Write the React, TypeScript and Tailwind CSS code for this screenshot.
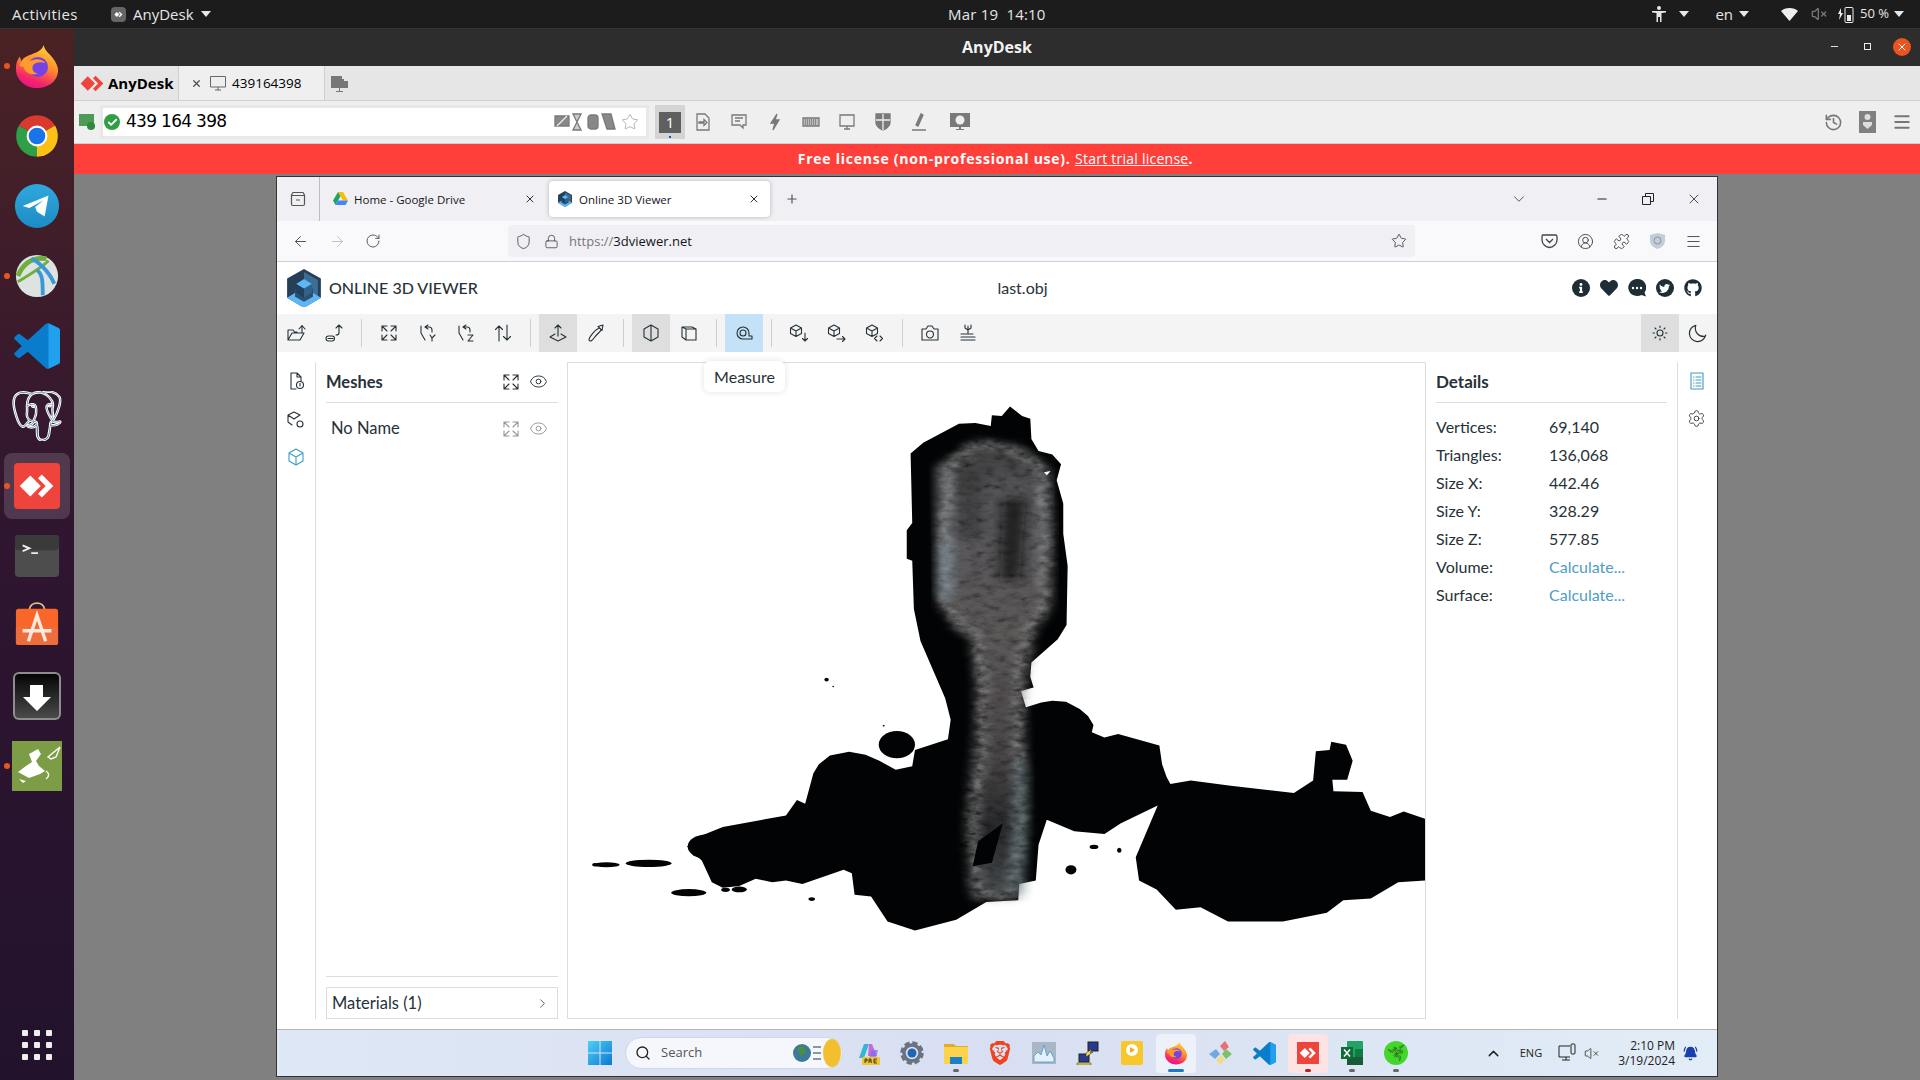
import type { ReactNode } from 'react'
import { ChevronRight, Search, Star, Lock, Shield, RotateCw, ArrowLeft, ArrowRight, Plus, X, ChevronDown, Minus, Menu, Puzzle, CircleUserRound, Eye, Settings, BellRing, ChevronUp, VolumeX, History, Check } from 'lucide-react'
import { FaGithub, FaTwitter, FaHeart, FaInfo } from 'react-icons/fa'
import { SiPostgresql, SiBrave, SiRazer } from 'react-icons/si'

const UI = "font-['Lato',sans-serif]"

function AnyDeskMark({ color = '#fff' }: { color?: string }) {
  return (
    <>
      <path d="M17 13 28 24 17 35 6 24Z" fill={color} />
      <path d="M29 12 41 24 29 36 25 32 33 24 25 16Z" fill={color} />
    </>
  )
}

function Firefox({ size = 46 }: { size?: number }) {
  return (
    <svg width={size} height={size} viewBox="0 0 48 48">
      <defs>
        <linearGradient id="ffa" x1="0.7" y1="0" x2="0.3" y2="1">
          <stop offset="0" stopColor="#ffd43a" />
          <stop offset="0.45" stopColor="#ff8a2a" />
          <stop offset="0.8" stopColor="#f5256a" />
          <stop offset="1" stopColor="#e31587" />
        </linearGradient>
      </defs>
      <path d="M31 2c1 6 5 8 9 13 4 5 6 10 6 13 0 12-10 19-22 19S2 38 2 27c0-5 1-9 4-13l2 6c2-4 6-7 10-8 5-2 11-4 13-10Z" fill="url(#ffa)" />
      <circle cx="25" cy="25" r="10.5" fill="#7542e5" />
      <path d="M6 24c1-6 5-10 8-10-1 3 2 5 5 4 5-2 11-1 14 3-5-2-11-1-13 2-2 4 0 8 5 9-7 2-14-1-15-7l-4-1Z" fill="#ff9a2e" />
    </svg>
  )
}

function Chrome({ size = 50 }: { size?: number }) {
  return (
    <svg width={size} height={size} viewBox="0 0 48 48">
      <path d="M24 24 6.700 14A20 20 0 0 1 41.300 14Z" fill="#d93a2d" />
      <path d="M24 24 41.300 14A20 20 0 0 1 24 44Z" fill="#fbc116" />
      <path d="M24 24 24 44A20 20 0 0 1 6.700 14Z" fill="#2f9e48" />
      <circle cx="24" cy="24" r="10" fill="#fff" />
      <circle cx="24" cy="24" r="8" fill="#1a73e8" />
    </svg>
  )
}

function Telegram() {
  return (
    <svg width={46} height={46} viewBox="0 0 48 48">
      <defs>
        <linearGradient id="tg" x1="0" y1="0" x2="0" y2="1">
          <stop offset="0" stopColor="#2fa8de" />
          <stop offset="1" stopColor="#1c8cc4" />
        </linearGradient>
      </defs>
      <circle cx="24" cy="24" r="23" fill="url(#tg)" />
      <path d="M9 24 36 13 32 35 24 30 22 25 31 18 16 26Z" fill="#fff" />
    </svg>
  )
}

function AnyConnect() {
  return (
    <svg width={46} height={46} viewBox="0 0 48 48">
      <circle cx="24" cy="24" r="22" fill="#dde3e1" />
      <path d="M4 24C10 10 20 4 34 6" stroke="#6fae3a" strokeWidth="5" fill="none" />
      <path d="M4 30C14 24 30 14 36 8" stroke="#6fae3a" strokeWidth="3" fill="none" />
      <path d="M18 6c6 2 18 12 24 26M24 18c6 4 6 12 6 26" stroke="#3a97d8" strokeWidth="4" fill="none" />
    </svg>
  )
}

function VSCode({ size = 46 }: { size?: number }) {
  return (
    <svg width={size} height={size} viewBox="0 0 100 100">
      <path d="M70.9 99.3c1.6.6 3.4.6 5-.2l20.6-9.9c2.2-1 3.5-3.2 3.5-5.6V16.4c0-2.4-1.4-4.6-3.5-5.6L75.9.9c-2.1-1-4.5-.8-6.4.6L30.1 37.5 12.9 24.5c-1.6-1.2-3.8-1.1-5.3.3L2 29.8c-1.8 1.7-1.8 4.5 0 6.2L17 50 2 64c-1.8 1.7-1.8 4.5 0 6.2l5.5 5c1.5 1.3 3.7 1.4 5.3.2l17.2-13 39.4 36c.5.5 1 .8 1.5 1zM75 27.2 45.1 50 75 72.8V27.2z" fill="#0a7ccc" />
      <path d="M75 .5 96.5 10.8c2.2 1 3.5 3.2 3.5 5.6v67.2c0 2.4-1.4 4.6-3.5 5.6L75 99.5Z" fill="#22a0f0" />
    </svg>
  )
}

function AppStore() {
  return (
    <svg className="-translate-y-[2px]" width={46} height={46} viewBox="0 0 48 48">
      <path d="M16 9c1-9 15-9 16 0" fill="none" stroke="#e8b98c" strokeWidth="2" />
      <rect x="2" y="8" width="44" height="38" rx="3" fill="#f8662a" />
      <rect x="2" y="27" width="44" height="19" rx="3" fill="#ee6d3c" />
      <path d="M15 42 24 15 33 42M9 31H39" fill="none" stroke="#ffe8dc" strokeWidth="3.5" />
    </svg>
  )
}

function Downloader() {
  return (
    <svg width={50} height={50} viewBox="0 0 50 50">
      <defs>
        <linearGradient id="dl" x1="0" y1="0" x2="0" y2="1">
          <stop offset="0" stopColor="#050505" />
          <stop offset="1" stopColor="#4a4a4a" />
        </linearGradient>
      </defs>
      <rect x="1" y="1" width="48" height="48" rx="6" fill="#8d8d8d" />
      <rect x="3" y="3" width="44" height="44" rx="4" fill="url(#dl)" />
      <path d="M18 14H31V26H39L25 40 11 26H18Z" fill="#fff" />
    </svg>
  )
}

function GreenTile() {
  return (
    <svg width={50} height={50} viewBox="0 0 50 50">
      <rect width="50" height="50" fill="#7d9c46" />
      <path d="M17 13 26 8 29 13 24 20 27 25 33 30 28 33 17 37 6 31 14 25 20 21Z" fill="#fff" />
      <path d="M36 16 48 6 44 16 39 18ZM34 30c3 2 4 5 0 8" fill="none" stroke="#fff" strokeWidth="1.4" />
      <path d="M7 38 14 40 11 42Z" fill="#fff" />
    </svg>
  )
}

function DockItem({ children, dot, active }: { children: ReactNode; dot?: boolean; active?: boolean }) {
  return (
    <div className="relative flex h-[70px] w-full items-center justify-center">
      {active && <div className="absolute left-1 top-[2px] h-[66px] w-[66px] rounded-lg bg-white/15" />}
      {dot && <div className="absolute left-1 top-[32px] size-[6px] rounded-full bg-[#e95420]" />}
      <div className="relative flex items-center justify-center">{children}</div>
    </div>
  )
}

function Dock() {
  return (
    <aside className="flex w-[74px] shrink-0 flex-col items-center justify-between bg-gradient-to-b from-[#4b2224] via-[#2f1530] to-[#22122c] pt-[2px] pb-[20px]">
      <div className="w-full">
        <DockItem dot><Firefox /></DockItem>
        <DockItem><Chrome /></DockItem>
        <DockItem><Telegram /></DockItem>
        <DockItem dot><AnyConnect /></DockItem>
        <DockItem><VSCode /></DockItem>
        <DockItem><SiPostgresql size={50} color="#336791" stroke="#fff" strokeWidth={0.5} /></DockItem>
        <DockItem dot active>
          <div className="size-[46px] rounded bg-[#ef443b]">
            <svg width={46} height={46} viewBox="0 0 48 48"><AnyDeskMark /></svg>
          </div>
        </DockItem>
        <DockItem>
          <svg width={46} height={46} viewBox="0 0 48 48">
            <rect x="1" y="2" width="46" height="44" rx="4" fill="#4d4d4d" />
            <rect x="1" y="2" width="46" height="16" rx="4" fill="#3a3a3a" />
            <path d="M9 13 16 16 9 19M18 21H25" fill="none" stroke="#eee" strokeWidth="2" />
          </svg>
        </DockItem>
        <DockItem><AppStore /></DockItem>
        <DockItem><Downloader /></DockItem>
        <DockItem dot><GreenTile /></DockItem>
      </div>
      <div className="grid grid-cols-3 gap-[6px]">
        {Array.from({ length: 9 }).map((_, i) => (
          <div key={i} className="size-[6px] rounded-[1px] bg-[#eee]" />
        ))}
      </div>
    </aside>
  )
}

function Caret() {
  return <span className="inline-block size-0 border-x-[5px] border-t-[6px] border-x-transparent border-t-[#e8e8e8]" />
}

function TopBar() {
  return (
    <header className="relative flex h-[29px] shrink-0 items-center border-b border-[#333] bg-[#1c1c1c] text-[15px] text-[#e6e6e6] font-['Open_Sans',sans-serif]">
      <span className="ml-3 w-[99px] tracking-[0.4px]">Activities</span>
      <span className="flex items-center gap-[7px]">
        <span className="flex size-[15px] items-center justify-center rounded-sm bg-[#666]">
          <svg width={11} height={11} viewBox="0 0 48 48"><AnyDeskMark /></svg>
        </span>
        AnyDesk
        <Caret />
      </span>
      <span className="absolute left-[948px] tracking-[0.2px]">Mar 19&nbsp; 14:10</span>
      <div className="ml-auto flex items-center pr-[16px]">
        <svg width={14} height={18} viewBox="0 0 14 18" fill="#e6e6e6"><circle cx="7" cy="3" r="2" /><path d="M0 6H14V7.500L9.500 8V17H8V12H6V17H4.500V8L0 7.500Z" /></svg>
        <span className="ml-[13px] flex"><Caret /></span>
        <span className="ml-[26px] mr-[6px]">en</span>
        <Caret />
        <svg className="ml-[32px]" width={17} height={14} viewBox="0 0 17 14" fill="#eee"><path d="M0 4C4 0 13 0 17 4L8.500 14Z" /></svg>
        <VolumeX className="ml-[13px] text-[#777]" size={16} />
        <svg className="ml-[11px]" width={16} height={18} viewBox="0 0 16 18"><path d="M3 3 0 9H2L1 15 5 8H3Z" fill="#eee" /><rect x="7" y="2.500" width="8" height="15" rx="1" fill="none" stroke="#eee" /><rect x="9" y="10" width="4" height="6" fill="#eee" /></svg>
        <span className="ml-[6px] mr-[5px] text-[13px]">50 %</span>
        <Caret />
      </div>
    </header>
  )
}

function AdIcon({ children, w = 18, className }: { children: ReactNode; w?: number; className?: string }) {
  return (
    <svg className={className} width={w} height={18} viewBox={`0 0 ${w} 18`} fill="none" stroke="#7a7a7a" strokeWidth="1.300">
      {children}
    </svg>
  )
}

function AnyDeskChrome() {
  const tools = [
    <AdIcon key="f" w={14}><path d="M1 1H9L13 5V17H1ZM3 9H8V6.500L11 9.500 8 12.500V10H3Z" /></AdIcon>,
    <AdIcon key="c"><path d="M2 2H16V12H13V15L10 12H2ZM5 5H13M5 8H10" /></AdIcon>,
    <AdIcon key="l" w={12}><path d="M8 1 2 10H6L4 17 10 7H6Z" fill="#7a7a7a" /></AdIcon>,
    <AdIcon key="k"><path d="M1 5H17V13H1Z" fill="#bbb" /><path d="M3 7H15M3 9H15M3 11H15" strokeDasharray="1 1" /></AdIcon>,
    <AdIcon key="m"><path d="M2 2H16V13H2ZM9 13V16M6 16H12" /></AdIcon>,
    <AdIcon key="s" w={16}><path d="M1 1H15V10C15 13 11 16 8 17 5 16 1 13 1 10Z" fill="#7a7a7a" /><path d="M8 1V17M1 7H15" stroke="#efefef" /></AdIcon>,
    <AdIcon key="p"><path d="M6 12 11 1 13 2 8 13ZM2 17H16" fill="#7a7a7a" /></AdIcon>,
  ]
  return (
    <div className="shrink-0 text-black">
      <div className="relative flex h-[37px] items-center justify-center bg-[#2d2d2d] pb-[2px] text-[16px] font-bold text-[#f2f2f2] font-['Open_Sans',sans-serif]">
        AnyDesk
        <div className="absolute right-[9px] flex items-center gap-[22px]">
          <Minus className="-translate-x-[2px]" size={11} color="#eee" />
          <span className="size-[7px] border border-[#eee]" />
          <span className="flex size-[18px] items-center justify-center rounded-full bg-[#e95420]"><X size={12} color="#fff" /></span>
        </div>
      </div>
      <div className="flex h-[35px] items-stretch border-b border-[#cfcfcf] bg-[#e6e6e6] font-['Open_Sans',sans-serif]">
        <div className="flex w-[105px] items-center gap-[4px] border-r border-[#cfcfcf] pl-[6px] text-[15px] font-bold">
          <svg width={24} height={17} viewBox="5 11 37 26"><AnyDeskMark color="#ef443b" /></svg>
          AnyDesk
        </div>
        <div className="flex w-[146px] items-center border-r border-[#cfcfcf] bg-[#efefef] pl-3 text-[13.500px]">
          <X size={11} color="#555" strokeWidth={3} />
          <svg className="ml-[8px]" width={16} height={16} viewBox="0 0 16 16" fill="none" stroke="#666"><path d="M.5 1.500H15.500V12H.5ZM8 12V15M5 15H11" /></svg>
          <span className="ml-[6px]">439164398</span>
        </div>
        <div className="ml-[6px] flex items-center">
          <svg width={17} height={17} viewBox="0 0 17 17" fill="#777"><path d="M0 1H11V4H13V6H17V13H9V16H12V17H5V16H8V13H0Z" /></svg>
        </div>
      </div>
      <div className="flex h-[43px] items-center border-b border-[#cfcfcf] bg-[#efefef]">
        <svg className="ml-[5px]" width={16} height={16} viewBox="0 0 16 16"><rect width="15" height="12" fill="#4f9a56" /><circle cx="12" cy="12" r="4" fill="#2f8a3d" /></svg>
        <div className="ml-[5px] flex h-[34px] w-[549px] items-center border-[3px] border-[#e8e8e8] bg-white">
          <span className="ml-[1px] flex size-4 items-center justify-center rounded-full bg-[#2f9e44]"><Check size={11} color="#fff" strokeWidth={4} /></span>
          <span className="ml-[6px] text-[17px] font-['DejaVu_Sans',sans-serif] tracking-[-0.7px]">439 164 398</span>
          <div className="ml-auto flex items-center pr-[7px]">
            <AdIcon><path d="M2 3H16V13H2Z" fill="#888" /><path d="M4 13 14 3" stroke="#eee" /></AdIcon>
            <AdIcon className="ml-[1px]" w={10}><path d="M1 1H9L1 17H9Z" fill="#ccc" /></AdIcon>
            <AdIcon className="ml-[5px]" w={12}><rect x="1" y="2" width="10" height="14" rx="3" fill="#888" /></AdIcon>
            <AdIcon className="ml-[2px]" w={16}><path d="M1 1H10L14 16H6Z" fill="#888" /></AdIcon>
            <Star className="ml-[4px]" size={18} color="#aaa" strokeWidth={1.200} />
          </div>
        </div>
        <div className="ml-[6px] flex h-[34px] w-[30px] items-center justify-center bg-[#d4d4d4]">
          <div className="relative flex h-[21px] w-[22px] items-center justify-center bg-[#5f5f5f] text-[14px] text-white">
            1
            <span className="absolute -bottom-[5px] size-[2px] bg-blue-700" />
          </div>
        </div>
        <div className="flex">
          {tools.map((t, i) => (
            <div key={i} className="flex w-[36px] items-center justify-center">{t}</div>
          ))}
        </div>
        <div className="ml-[12px] flex h-[20px] w-[22px] items-center justify-center">
          <svg width={20} height={20} viewBox="0 0 20 20" fill="#7a7a7a"><path d="M0 1H20V15H11V17H14V18H6V17H9V15H0Z" /><circle cx="10" cy="8" r="4.500" fill="#efefef" /></svg>
        </div>
        <div className="ml-auto flex items-center gap-[16px] pr-[8px]">
          <History size={19} color="#777" />
          <svg width={17} height={22} viewBox="0 0 17 22"><rect width="17" height="22" fill="#808080" /><circle cx="8.500" cy="6" r="3" fill="#ddd" /><path d="M4 11H13V14L8.500 18 4 14Z" fill="#ddd" /></svg>
          <Menu size={20} color="#777" strokeWidth={2.400} />
        </div>
      </div>
      <div className="flex h-[30px] items-center justify-center bg-[#ff3f3a] pb-[2px] text-[14px] font-bold tracking-[0.75px] text-white font-['Open_Sans',sans-serif]">
        <span className="pr-[3px]">
          Free license (non-professional use).&nbsp;<span className="font-normal tracking-[0.25px] underline">Start trial license</span>.
        </span>
      </div>
    </div>
  )
}

function Tabs() {
  return (
    <div className="flex h-[44px] items-center bg-[#f0f0f4] font-['Open_Sans',sans-serif] text-[11.500px] text-[#15141a]">
      <div className="flex h-full w-[43px] items-center justify-center border-r border-[#bcbcc2]">
        <svg width={16} height={16} viewBox="0 0 16 16" fill="none" stroke="#555" strokeWidth="1.200"><path d="M3 1.500H13L14.500 4V13C14.500 14 14 14.500 13 14.500H3C2 14.500 1.500 14 1.500 13V4ZM1.500 4.500H14.500M6 9H10" /></svg>
      </div>
      <div className="flex h-full w-[229px] items-center pl-[13px] pr-[13px]">
        <svg width={15} height={14} viewBox="0 0 15 14">
          <path d="M5 0H10L15 8.500H10Z" fill="#fbbc04" />
          <path d="M5 0 0 8.500 2.500 13 7.500 4.300Z" fill="#1fa463" />
          <path d="M5 8.500H15L12.500 13H2.500Z" fill="#4285f4" />
        </svg>
        <span className="ml-[6px] pt-[1px]">Home - Google Drive</span>
        <X className="ml-auto" size={12} color="#333" />
      </div>
      <div className="flex h-[36px] w-[221px] items-center rounded bg-white pl-[9px] pr-[10px] shadow-[0_0_4px_rgba(0,0,0,0.25)]">
        <O3dvLogo size={14} />
        <span className="ml-[7px] pt-[1px]">Online 3D Viewer</span>
        <X className="ml-auto" size={12} color="#333" />
      </div>
      <Plus className="ml-[15px]" size={14} color="#555" />
      <div className="ml-auto flex items-center pr-[15px]">
        <ChevronDown size={18} color="#555" strokeWidth={1.300} />
        <Minus className="ml-[67px]" size={14} color="#222" />
        <svg className="ml-[33px]" width={12} height={12} viewBox="0 0 12 12" fill="none" stroke="#222"><path d="M.5 3.500H8.500V11.500H.5ZM3.500 3.500V.5H11.500V8.500H8.500" /></svg>
        <X className="ml-[32px]" size={16} color="#222" strokeWidth={1.200} />
      </div>
    </div>
  )
}

function NavBar() {
  return (
    <div className="flex h-[41px] items-center border-b border-[#cfcfd8] bg-[#f9f9fb] font-['Open_Sans',sans-serif] text-[#444]">
      <ArrowLeft className="ml-[15px]" size={17} strokeWidth={1.300} />
      <ArrowRight className="ml-[20px] text-[#bbb]" size={17} strokeWidth={1.300} />
      <RotateCw className="ml-[19px]" size={16} strokeWidth={1.300} />
      <div className="ml-[127px] flex h-[32px] w-[907px] items-center rounded bg-[#f0f0f4] pl-[7px] pr-[8px] text-[13px]">
        <Shield size={17} strokeWidth={1.200} />
        <Lock className="ml-[12px]" size={15} strokeWidth={1.300} />
        <span className="ml-[10px] pt-[2px] text-[#777]">https://<span className="text-[#15141a]">3dviewer.net</span></span>
        <Star className="ml-auto" size={16} strokeWidth={1.300} />
      </div>
      <div className="ml-auto flex items-center gap-[19px] pr-[15px]">
        <svg width={17} height={16} viewBox="0 0 17 16" fill="none" stroke="#444" strokeWidth="1.300"><path d="M2 2H15C16 2 16 3 16 4V7C16 11 12 14.500 8.500 14.500S1 11 1 7V4C1 3 1 2 2 2ZM5 6 8.500 9.500 12 6" /></svg>
        <CircleUserRound size={17} strokeWidth={1.300} />
        <Puzzle size={17} strokeWidth={1.300} />
        <svg width={17} height={18} viewBox="0 0 17 18"><path d="M1 3 8.500 1 16 3V9C16 13 12 16 8.500 17 5 16 1 13 1 9Z" fill="#c4ccd8" /><circle cx="8.500" cy="8.500" r="3.500" fill="none" stroke="#8893a5" /></svg>
        <Menu size={17} strokeWidth={1.300} />
      </div>
    </div>
  )
}

function O3dvLogo({ size = 34 }: { size?: number }) {
  return (
    <svg width={size} height={size * 1.140} viewBox="0 0 34 39">
      <path d="M17 0 34 9.500V29L17 39 0 29V9.500Z" fill="#263f58" />
      <path d="M17 3 31 11V27.500L17 35.500Z" fill="#3d6c94" />
      <path d="M17 39 0 29 9 23.500 17 28 25 23.500 34 29Z" fill="#5cb6f8" />
      <path d="M17 15 26 20V28L17 33 8 28V20Z" fill="#2b4e6e" />
      <path d="M17 10 25 15 17 20 9 15Z" fill="#5cb6f8" />
      <path d="M9 15 17 20V29L9 24Z" fill="#224059" />
      <path d="M25 15V24L17 29V20Z" fill="#33618a" />
    </svg>
  )
}

function AppHeader() {
  return (
    <div className={`flex h-[52px] items-center justify-between bg-white pl-[10px] pr-[9px] text-[#263238] ${UI}`}>
      <div className="flex w-[300px] items-center gap-[8px]">
        <O3dvLogo />
        <span className="text-[16px] font-medium">ONLINE 3D VIEWER</span>
      </div>
      <span className="text-[16px]">last.obj</span>
      <div className="flex w-[250px] justify-end gap-[10px] pr-[6px] text-[#1f2d36]">
        <span className="flex size-[18px] items-center justify-center rounded-full bg-[#1f2d36]"><FaInfo size={10} color="#fff" /></span>
        <FaHeart size={18} />
        <svg width={18} height={18} viewBox="0 0 18 18">
          <path d="M9 0A9 8.500 0 1 0 13.500 16L18 17.500 16.500 13.500A8.500 8.500 0 0 0 9 0Z" fill="#1f2d36" />
          <circle cx="5" cy="9" r="1.200" fill="#fff" />
          <circle cx="9" cy="9" r="1.200" fill="#fff" />
          <circle cx="13" cy="9" r="1.200" fill="#fff" />
        </svg>
        <span className="flex size-[18px] items-center justify-center rounded-full bg-[#1f2d36]"><FaTwitter size={11} color="#fff" /></span>
        <FaGithub size={18} />
      </div>
    </div>
  )
}

function Icon({ children, size = 20 }: { children: ReactNode; size?: number }) {
  return (
    <svg width={size} height={size} viewBox="0 0 20 20" fill="none" stroke="#263238" strokeWidth="1.100" strokeLinecap="round" strokeLinejoin="round">
      {children}
    </svg>
  )
}

function Tool({ children, bg, tip }: { children: ReactNode; bg?: string; tip?: string }) {
  return (
    <div className={`relative flex h-[38px] w-[38px] items-center justify-center ${bg ?? ''}`}>
      {children}
      {tip && (
        <div className="absolute left-[-21px] top-[47px] z-10 flex h-[31px] w-[81px] items-center justify-center rounded-md bg-white text-[16px] text-[#263238] shadow-[0_0_6px_rgba(0,0,0,0.12)]">
          {tip}
        </div>
      )}
    </div>
  )
}

function Sep() {
  return <div className="mx-2 h-[28px] w-px bg-[#cfcfcf]" />
}

function Toolbar() {
  return (
    <div className={`flex h-[38px] items-center bg-[#f4f4f4] ${UI}`}>
      <Tool><Icon><path d="M2 17V7H7L8.500 9H11M2 17H14L18 10H6L2 17M13 6 16 2.500 19 6M16 3V9" /></Icon></Tool>
      <Tool><Icon><path d="M8 13H4.500A2.500 2.500 0 0 0 4.500 18H8A2.500 2.500 0 0 0 8 13ZM4 15.500H9M12 5 15 2 18 5M15 2.500V10C15 11.500 14 12 12 12" /></Icon></Tool>
      <Sep />
      <Tool><Icon><path d="M3 8V3H8M3 3 8 8M17 8V3H12M17 3 12 8M3 12V17H8M3 17 8 12M17 12V17H12M17 17 12 12" /></Icon></Tool>
      <Tool><Icon><path d="M11 2 8 4 11 6M8 4H12C14 4 15 5 15 7V9M4 3V10L8 17M13 12 15 15 18 12M15 15V18" /></Icon></Tool>
      <Tool><Icon><path d="M11 2 8 4 11 6M8 4H12C14 4 15 5 15 7V9M4 3V10L8 17M13 12H18L13 18H18" /></Icon></Tool>
      <Tool><Icon><path d="M6 18V3M2.500 6.500 6 3 9.500 6.500M14 2V17M10.500 13.500 14 17 17.500 13.500" /></Icon></Tool>
      <Sep />
      <Tool bg="bg-[#dedede]"><Icon><path d="M10 13V2M7 5 10 2 13 5M7 11 2 14 10 18 18 14 13 11" /></Icon></Tool>
      <Tool><Icon><path d="M3 17C3 14 9 7 13 5M17 2 12 3.500 16 7.500ZM3 17C4 19 6 18 8 15 11 11 14 9 15 7" /></Icon></Tool>
      <Sep />
      <Tool bg="bg-[#dedede]"><Icon><path d="M10 2 17 6V14L10 18 3 14V6ZM10 2V18" /></Icon></Tool>
      <Tool><Icon><path d="M7 6H17V17H7ZM7 6 3 4V14L7 17M3 4H13L17 6" /></Icon></Tool>
      <Sep />
      <Tool bg="bg-[#c3e1f7]" tip="Measure"><Icon><path d="M9 4A6 6 0 1 0 9 16H18V13H15M9 4A6 6 0 0 1 15 10V13M9 7A3 3 0 1 0 9 13 3 3 0 0 0 9 7Z" /></Icon></Tool>
      <Sep />
      <Tool><Icon><path d="M7 2 12.500 5V10.500L7 13.500 1.500 10.500V5ZM1.500 5 7 8 12.500 5M7 8V13.500M16 10V18M13.500 15.500 16 18 18.500 15.500" /></Icon></Tool>
      <Tool><Icon><path d="M7 2 12.500 5V10.500L7 13.500 1.500 10.500V5ZM1.500 5 7 8 12.500 5M7 8V13.500M10 16H18M15.500 13.500 18 16 15.500 18.500" /></Icon></Tool>
      <Tool><Icon><path d="M7 2 12.500 5V10.500L7 13.500 1.500 10.500V5ZM1.500 5 7 8 12.500 5M7 8V13.500M12 13 9.500 15.500 12 18M15 13 17.500 15.500 15 18" /></Icon></Tool>
      <Sep />
      <Tool><Icon><path d="M2 6H6L8 3H12L14 6H18V17H2ZM10 8A3.500 3.500 0 1 0 10 15 3.500 3.500 0 0 0 10 8Z" /></Icon></Tool>
      <Tool><Icon><path d="M10 10V3M7 2V5L10 7 13 5V2M3 11H15M3 14H17M3 17H17" /></Icon></Tool>
      <div className="ml-auto flex">
        <Tool bg="bg-[#dedede]"><Icon><circle cx="10" cy="10" r="3" /><path d="M10 3V4.500M10 15.500V17M3 10H4.500M15.500 10H17M5 5 6 6M14 14 15 15M15 5 14 6M6 14 5 15" /></Icon></Tool>
        <Tool><Icon size={22}><path d="M16 13A7.500 7.500 0 0 1 8 3 7.500 7.500 0 1 0 17 12" /></Icon></Tool>
      </div>
    </div>
  )
}

function SidePanelLeft() {
  return (
    <div className={`flex w-[290px] shrink-0 text-[16.500px] text-[#263238] ${UI}`}>
      <div className="flex w-[39px] flex-col items-center gap-[18px] border-r border-[#ddd] pt-[9px]">
        <Icon><path d="M5 2H11L15 6V10M5 2V18H10M11 2V6H15" /><circle cx="14" cy="14" r="3.500" /><path d="M14 12.500V15" /></Icon>
        <Icon><path d="M8 3 14 6 8 10 2 6ZM2 6V13L6 16M14 12A3 3 0 1 0 14 18 3 3 0 0 0 14 12Z" /></Icon>
        <Icon><path d="M10 2 17 6V14L10 18 3 14V6ZM3 6 10 10 17 6M10 10V18" stroke="#3f9bc3" /></Icon>
      </div>
      <div className="flex min-w-0 flex-1 flex-col pl-[10px] pr-[9px]">
        <div className="flex h-[41px] items-center justify-between border-b border-[#ddd]">
          <span className="font-bold">Meshes</span>
          <div className="mr-[10px] flex gap-[8px]">
            <Icon><path d="M3 8V3H8M3 3 8 8M17 8V3H12M17 3 12 8M3 12V17H8M3 17 8 12M17 12V17H12M17 17 12 12" /></Icon>
            <Eye size={19} strokeWidth={1.200} />
          </div>
        </div>
        <div className="mt-[12px] flex h-[27px] items-center justify-between pl-[5px]">
          <span>No Name</span>
          <div className="mr-[10px] flex gap-[8px] opacity-50">
            <Icon><path d="M3 8V3H8M3 3 8 8M17 8V3H12M17 3 12 8M3 12V17H8M3 17 8 12M17 12V17H12M17 17 12 12" /></Icon>
            <Eye size={19} strokeWidth={1.200} />
          </div>
        </div>
        <div className="mt-auto border-t border-[#ddd] pt-[10px]">
          <div className="flex h-[32px] items-center justify-between border border-[#ddd] pl-[5px] pr-[7px]">
            <span>Materials (1)</span>
            <ChevronRight size={15} strokeWidth={1.200} />
          </div>
        </div>
      </div>
    </div>
  )
}

const MESH = '783,74 805,100 820,108 822,165 835,198 860,208 876,235 868,280 880,345 880,430 888,520 886,685 870,725 822,790 820,830 826,860 803,870 812,915 840,902 860,897 885,900 910,920 925,940 935,965 932,985 955,1000 980,990 1055,1022 1060,1075 1068,1110 1075,1130 1112,1120 1185,1135 1300,1155 1335,1120 1340,1038 1365,1035 1368,1012 1395,1020 1407,1065 1397,1118 1370,1118 1372,1150 1425,1152 1440,1205 1475,1222 1500,1207 1541,1228 1541,1400 1490,1405 1440,1450 1390,1455 1360,1490 1280,1515 1180,1515 1130,1475 1085,1482 1050,1425 1018,1400 1012,1335 1052,1190 985,1240 955,1270 900,1262 850,1230 835,1300 830,1400 800,1410 798,1455 740,1460 685,1510 610,1540 560,1515 530,1445 500,1440 495,1380 480,1370 405,1410 375,1400 350,1405 320,1395 290,1415 260,1420 240,1405 222,1345 195,1305 225,1272 260,1250 375,1218 395,1175 410,1185 425,1100 435,1075 455,1050 490,1040 520,1048 545,1065 575,1090 605,1080 610,1035 670,1005 675,950 665,890 620,730 608,640 605,505 595,500 595,420 605,400 602,205 625,175 690,122 720,120 748,128 750,98 768,100'

const ROCK = '665,240 720,175 795,190 845,245 852,420 850,630 820,700 808,800 800,900 806,1240 792,1445 720,1445 712,1240 728,1000 730,850 720,720 690,690 660,620 660,420'

const SPOTS: [number, number, number, number][] = [
  [577, 1020, 33, 38], [230, 1305, 34, 34], [48, 1356, 24, 7], [125, 1352, 42, 10], [198, 1434, 32, 10],
  [290, 1425, 14, 8], [265, 1426, 8, 6], [422, 1452, 6, 5], [894, 1370, 10, 13], [936, 1306, 8, 6],
  [982, 1315, 4, 7], [449, 838, 4, 5], [27, 1356, 5, 5], [553, 967, 2, 2], [461, 857, 1.500, 2],
]

function MeshDrawing() {
  return (
    <svg className="block h-full w-full" viewBox="568 363 856 654">
      <defs>
        <filter id="rock" x="-0.1" y="-0.05" width="1.200" height="1.100">
          <feGaussianBlur in="SourceGraphic" stdDeviation="13" result="soft" />
          <feTurbulence type="fractalNoise" baseFrequency="0.045 0.065" numOctaves="4" seed="7" result="noise" />
          <feColorMatrix in="noise" type="matrix" values="2.200 0 0 0 -0.400 2.200 0 0 0 -0.400 2.200 0 0 0 -0.400 0 0 0 1 0" result="gray" />
          <feComposite in="gray" in2="soft" operator="in" result="tex" />
          <feBlend in="tex" in2="soft" mode="multiply" />
        </filter>
        <filter id="soft" x="-0.5" y="-0.5" width="2" height="2">
          <feGaussianBlur stdDeviation="12" />
        </filter>
        <linearGradient id="rockfill" x1="0" y1="0" x2="0" y2="1">
          <stop offset="0" stopColor="#3a3a3b" />
          <stop offset="0.12" stopColor="#58595b" />
          <stop offset="0.45" stopColor="#5c5859" />
          <stop offset="0.7" stopColor="#484546" />
          <stop offset="0.85" stopColor="#262729" />
          <stop offset="1" stopColor="#4a4e50" />
        </linearGradient>
      </defs>
      <g transform="translate(580 380) scale(0.5485 0.357)">
        <polygon points={MESH} fill="#020304" />
        {SPOTS.map(([cx, cy, rx, ry], i) => (
          <ellipse key={i} cx={cx} cy={cy} rx={rx} ry={ry} fill="#020304" />
        ))}
        <polygon points={ROCK} fill="url(#rockfill)" filter="url(#rock)" />
        <path d="M650 240 672 235 676 620 660 610Z" fill="#9aa3a8" opacity="0.5" filter="url(#soft)" />
        <path d="M838 250 854 255 850 600 834 600Z" fill="#8a8d8e" opacity="0.35" filter="url(#soft)" />
        <path d="M690 250H730L730 440H690Z" fill="#141416" opacity="0.35" filter="url(#soft)" />
        <path d="M770 330H812L800 560H765Z" fill="#0e0f10" opacity="0.75" filter="url(#soft)" />
        <path d="M657 450 680 460 672 620 654 600Z" fill="#7f9fb2" opacity="0.4" filter="url(#soft)" />
        <path d="M796 1060 812 1060 806 1440 785 1440Z" fill="#5f7780" opacity="0.6" filter="url(#soft)" />
        <path d="M725 1290 770 1240 750 1350 715 1360Z" fill="#020304" />
        <path d="M845 258 857 254 850 266Z" fill="#fff" />
      </g>
    </svg>
  )
}

const DETAILS: [string, string, boolean?][] = [
  ['Vertices:', '69,140'],
  ['Triangles:', '136,068'],
  ['Size X:', '442.46'],
  ['Size Y:', '328.29'],
  ['Size Z:', '577.85'],
  ['Volume:', 'Calculate...', true],
  ['Surface:', 'Calculate...', true],
]

function SidePanelRight() {
  return (
    <div className={`flex w-[291px] shrink-0 text-[16px] text-[#263238] ${UI}`}>
      <div className="flex min-w-0 flex-1 flex-col pl-[10px] pr-[10px]">
        <div className="flex h-[41px] items-center border-b border-[#ddd] text-[17px] font-bold">Details</div>
        <div className="mt-[10px] flex flex-col">
          {DETAILS.map(([label, value, link]) => (
            <div key={label} className="flex h-[28px] items-center">
              <span className="w-[113px]">{label}</span>
              <span className={link ? 'text-[#4f9dc7]' : ''}>{value}</span>
            </div>
          ))}
        </div>
      </div>
      <div className="flex w-[40px] flex-col items-center gap-[18px] border-l border-[#ddd] pr-[2px] pt-[9px]">
        <Icon><path d="M4 2H16V18H4Z" stroke="#3f9bc3" /><path d="M6.500 6H7M9 6H14M6.500 9H7M9 9H14M6.500 12H7M9 12H14M6.500 15H7M9 15H14" stroke="#3f9bc3" /></Icon>
        <Settings size={19} strokeWidth={1.100} />
      </div>
    </div>
  )
}

function Taskbar() {
  return (
    <div className="flex h-[47px] shrink-0 items-center border-t border-[#b5b5b5] bg-gradient-to-r from-[#dfe8f6] via-[#d8dff2] to-[#e2edf7] font-['Open_Sans',sans-serif] text-[#222]">
      <svg className="ml-[311px]" width={24} height={24} viewBox="0 0 24 24">
        <defs>
          <linearGradient id="win" x1="0" y1="0" x2="1" y2="1">
            <stop offset="0" stopColor="#4fd0f5" />
            <stop offset="1" stopColor="#0a78d4" />
          </linearGradient>
        </defs>
        <path d="M0 0H11.500V11.500H0ZM12.500 0H24V11.500H12.500ZM0 12.500H11.500V24H0ZM12.500 12.500H24V24H12.500Z" fill="url(#win)" />
      </svg>
      <div className="ml-[13px] flex h-[32px] w-[218px] items-center rounded-full border border-[#cfd6e6] bg-[#f5f7fc] pl-[9px] pr-[1px] text-[13px] text-[#555]">
        <Search size={16} color="#222" />
        <span className="ml-[10px]">Search</span>
        <svg className="ml-auto" width={48} height={28} viewBox="0 0 48 28">
          <circle cx="9" cy="14" r="9" fill="#3c7a9a" />
          <path d="M4 9 10 7 13 13 8 17Z" fill="#4d8f3d" />
          <path d="M20 8H28M20 14H28M20 20H28" stroke="#8a96a8" strokeWidth="2" />
          <ellipse cx="39" cy="14" rx="9" ry="14" fill="#f4bf2f" />
        </svg>
      </div>
      <div className="ml-[5px] flex items-center">
        <TaskIcon>
          <svg width={24} height={24} viewBox="0 0 24 24"><path d="M3 17 8 3H13L8 17Z" fill="#36b6d6" /><path d="M13 3H16L21 15H12Z" fill="#c56be0" /><path d="M3 17H13L16 9H22L20 17Z" fill="#7b6bef" opacity="0.7" /><rect x="6" y="16" width="18" height="8" rx="1" fill="#f4c430" /><path d="M9 18V22M9 18H11V20H9M13 22V18H15V20H13M15 20 15.500 22M18 18H21M18 20H20.500M18 22H21M18 18V22" stroke="#222" strokeWidth="0.800" fill="none" /></svg>
        </TaskIcon>
        <TaskIcon>
          <svg width={24} height={24} viewBox="0 0 24 24" fill="none">
            <circle cx="12" cy="12" r="10" stroke="#6b7280" strokeWidth="3.500" strokeDasharray="5.200 2.650" />
            <circle cx="12" cy="12" r="8" stroke="#6b7280" strokeWidth="3.500" />
            <circle cx="12" cy="12" r="4.500" fill="#1f66b5" />
          </svg>
        </TaskIcon>
        <TaskIcon under="#666">
          <svg width={24} height={24} viewBox="0 0 24 24"><path d="M0 3H10L12 5H24V23H0Z" fill="#e4a92f" /><rect y="6" width="24" height="17" fill="#fbd34d" /><rect x="6" y="16" width="12" height="7" fill="#1f7fc4" /></svg>
        </TaskIcon>
        <TaskIcon><SiBrave size={24} color="#f0431f" /></TaskIcon>
        <TaskIcon>
          <svg width={24} height={22} viewBox="0 0 24 22"><rect width="24" height="22" fill="#a9b6c3" /><path d="M2 20V14L6 10 9 13 12 3 15 14 18 9 22 16V20Z" fill="#e4f1fb" stroke="#3d8fd0" strokeWidth="0.700" /></svg>
        </TaskIcon>
        <TaskIcon>
          <svg width={24} height={24} viewBox="0 0 24 24"><rect x="12" y="1" width="10" height="9" fill="#273a8c" stroke="#222" /><rect x="3" y="13" width="10" height="8" fill="#273a8c" stroke="#222" /><path d="M1 22H15V24H1ZM10 12 16 8 14 12 17 11 10 16Z" fill="#f6e23a" stroke="#222" strokeWidth="0.500" /></svg>
        </TaskIcon>
        <TaskIcon>
          <svg width={22} height={24} viewBox="0 0 22 24"><rect width="22" height="24" rx="2" fill="#f7c72b" /><circle cx="11" cy="9" r="6" fill="#fff" /><path d="M9 6 14 9 9 12Z" fill="#f7a71b" /></svg>
        </TaskIcon>
        <TaskIcon bg="bg-white/50 rounded" under="#1e78c8" wide><Firefox size={24} /></TaskIcon>
        <TaskIcon>
          <svg width={24} height={24} viewBox="0 0 24 24"><path d="M12 5 17 0 21 6 16 10Z" fill="#e87070" /><path d="M18 8 24 13 18 18 14 13Z" fill="#7fbe6a" /><path d="M8 8 12 13 7 18 1 13Z" fill="#74a9e0" /><path d="M13 14 17 19 12 24 8 19Z" fill="#f0dd8a" /></svg>
        </TaskIcon>
        <TaskIcon><VSCode size={23} /></TaskIcon>
        <TaskIcon bg="bg-[#fde3e3] rounded" under="#b22222">
          <svg width={22} height={24} viewBox="0 0 48 48"><rect width="48" height="48" fill="#ef443b" /><AnyDeskMark /></svg>
        </TaskIcon>
        <TaskIcon under="#666">
          <svg width={22} height={24} viewBox="0 0 22 24"><rect x="6" width="16" height="24" rx="1" fill="#21a366" /><rect x="14" y="8" width="8" height="8" fill="#107c41" /><rect x="6" y="16" width="16" height="8" fill="#185c37" /><rect y="6" width="12" height="12" fill="#0f6b38" /><path d="M3 8.500 9 15.500M9 8.500 3 15.500" stroke="#fff" strokeWidth="1.500" /></svg>
        </TaskIcon>
        <TaskIcon under="#666">
          <span className="flex size-[24px] items-center justify-center rounded-full bg-[#44d62c]"><SiRazer size={16} color="#111" /></span>
        </TaskIcon>
      </div>
      <div className="ml-auto flex items-center pr-[19px]">
        <ChevronUp size={17} />
        <span className="ml-[18px] text-[11px]">ENG</span>
        <svg className="ml-[16px]" width={20} height={20} viewBox="0 0 20 20" fill="none" stroke="#222"><path d="M1 3H12M1 3V14H12M8 14V17M4 17H12" /><rect x="13" y="1" width="4" height="10" rx="1" /></svg>
        <VolumeX className="ml-[6px]" size={15} strokeWidth={1.200} />
        <div className="ml-[19px] text-right text-[12px] leading-[15px]">
          <div>2:10 PM</div>
          <div>3/19/2024</div>
        </div>
        <BellRing className="ml-[8px]" size={15} color="#1b3fae" fill="#1b3fae" />
      </div>
    </div>
  )
}

function TaskIcon({ children, bg, under, wide }: { children: ReactNode; bg?: string; under?: string; wide?: boolean }) {
  return (
    <div className={`relative mr-[4px] flex h-[39px] w-[40px] items-center justify-center ${bg ?? ''}`}>
      {children}
      {under && (
        <span className={`absolute bottom-[1px] h-[3px] rounded-full ${wide ? 'w-[16px]' : 'w-[6px]'}`} style={{ background: under }} />
      )}
    </div>
  )
}

export default function App() {
  return (
    <div className="flex h-screen w-screen flex-col overflow-hidden">
      <TopBar />
      <div className="flex min-h-0 flex-1">
        <Dock />
        <div className="flex min-w-0 flex-1 flex-col bg-[#808080]">
          <AnyDeskChrome />
          <div className="flex min-h-0 flex-1 pl-[202px] pr-[202px] pt-[2px] pb-[3px]">
            <div className="flex min-w-0 flex-1 flex-col border border-[#333] bg-white">
              <Tabs />
              <NavBar />
              <AppHeader />
              <Toolbar />
              <div className="flex min-h-0 flex-1 py-[10px]">
                <SidePanelLeft />
                <div className="min-w-0 flex-1 border border-[#ddd]">
                  <MeshDrawing />
                </div>
                <SidePanelRight />
              </div>
              <Taskbar />
            </div>
          </div>
        </div>
      </div>
    </div>
  )
}
